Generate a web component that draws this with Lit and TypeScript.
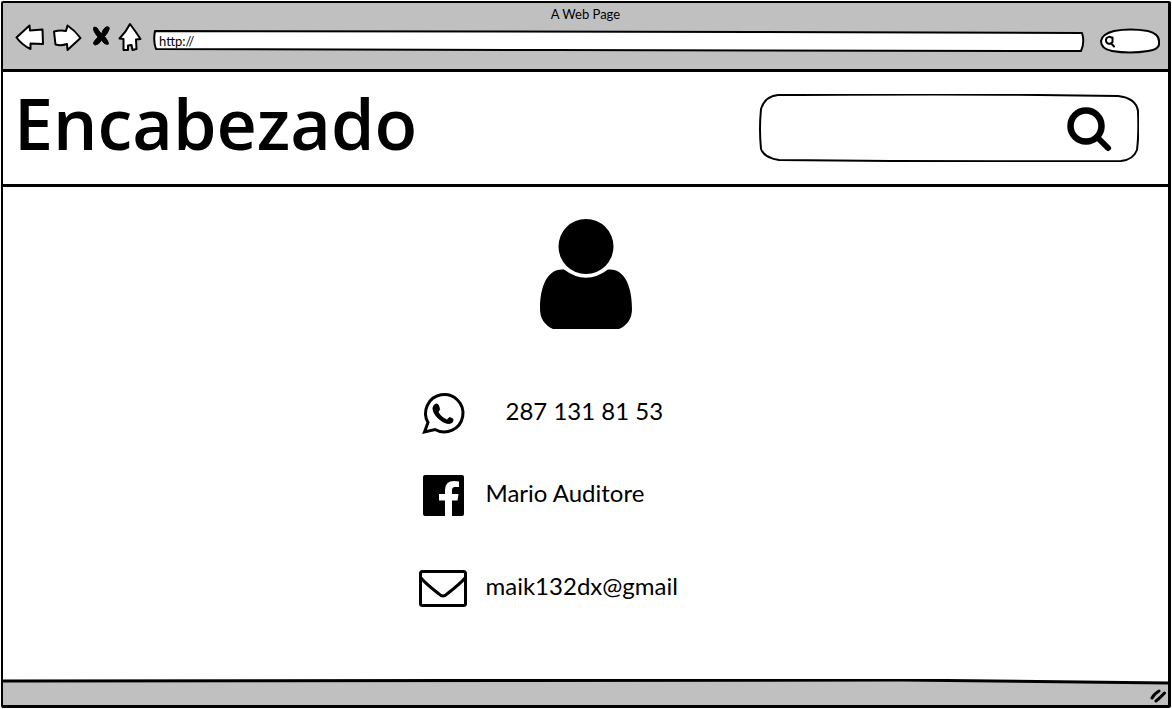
import { LitElement, html, svg, css } from "lit";
import { customElement } from "lit/decorators.js";

const outline = (d: string, w: number, h: number, fill = "#fff") => html`
  <svg class="outline" viewBox="0 0 ${w} ${h}" preserveAspectRatio="none" aria-hidden="true">
    ${svg`<path d=${d} fill=${fill} stroke="#000" stroke-width="2" vector-effect="non-scaling-stroke" stroke-linejoin="round"/>`}
  </svg>`;

@customElement("browser-toolbar")
export class BrowserToolbar extends LitElement {
  static styles = css`
    :host {
      display: block;
      background: #c0c0c0;
      border-bottom: 3px solid #000;
      font-family: Lato, "Open Sans", sans-serif;
      color: #000;
    }
    .title {
      padding-top: 3px;
      font-size: 13px;
      line-height: 16px;
      text-align: center;
    }
    .row {
      display: flex;
      align-items: center;
      gap: 15px;
      padding: 2px 8px 15px 9px;
    }
    .nav {
      display: flex;
      gap: 8px;
      flex: none;
      margin-top: -4px;
    }
    button {
      border: 0;
      padding: 0;
      background: none;
      display: flex;
    }
    svg {
      display: block;
    }
    .nav path {
      fill: #fff;
      stroke: #000;
      stroke-width: 2;
      stroke-linejoin: round;
    }
    .nav .cross {
      fill: #000;
      stroke-width: 1;
    }
    .field {
      position: relative;
      display: flex;
      align-items: center;
      margin-top: 4px;
    }
    .address {
      flex: 1;
      height: 22px;
      margin-left: -4px;
    }
    .quick {
      width: 60px;
      height: 26px;
    }
    .outline {
      position: absolute;
      inset: 0;
      width: 100%;
      height: 100%;
    }
    input {
      position: relative;
      flex: 1;
      min-width: 0;
      border: 0;
      padding: 0 6px;
      background: none;
      font: inherit;
      font-size: 13px;
      line-height: 16px;
      color: #000;
      outline: none;
    }
    .lens {
      position: relative;
      flex: none;
      margin-left: 4px;
    }
  `;

  render() {
    return html`
      <div class="title">A Web Page</div>
      <div class="row">
        <div class="nav">
          <button aria-label="Back">
            <svg width="32" height="30" viewBox="0 0 32 30"><path d="M4.500 15.500 17.500 3.500 18 8.500 30.500 7.500 31 22 18.500 21.500V27Q10 23 4.500 15.500Z" /></svg>
          </button>
          <button aria-label="Forward">
            <svg width="30" height="30" viewBox="0 0 30 30"><path d="M2 9.500Q8 8 14 9L15.500 3.500Q23 8.500 28.500 16L15.500 28 15 22Q9 24 3.500 22.500Z" /></svg>
          </button>
          <button aria-label="Stop">
            <svg width="20" height="30" viewBox="-2 0 20 30"><path class="cross" d="M2 5Q5 4.500 7 9L9.500 12Q11 6.500 14 5Q18 4 17 7.500Q15.500 11.500 12.500 14.500Q16.500 19 16.500 22Q13 23.500 9.500 18Q7 22.500 3.500 23Q0 22.500 2.500 19L6 15Q0 8 2 5Z" /></svg>
          </button>
          <button aria-label="Home">
            <svg width="24" height="30" viewBox="0 0 24 30"><path d="M12 2Q8 10 1.500 16.500L5.500 17 5.500 28 10 28 10 23.500 13.500 23 14.500 28 18.500 27 18 17.500 22.500 17Q18 10 12 2Z" /></svg>
          </button>
        </div>
        <label class="field address">
          ${outline("M2 1Q300 2 600 2L929 3Q932 12 928 21Q600 20 400 20L3 19Q0 11 2 1Z", 932, 22)}
          <input type="text" aria-label="Address" value="http://" />
        </label>
        <label class="field quick">
          ${outline("M14 3Q30 0 48 3Q60 6 59 15Q60 21 48 23Q30 26 12 23Q1 21 1 13Q2 6 14 3Z", 60, 26)}
          <svg class="lens" width="12" height="14" viewBox="0 0 12 14" aria-hidden="true"><path d="M7.500 3.500A3.500 3.500 0 1 0 8.500 8V3.500M7 9 10 12.500" fill="none" stroke="#000" stroke-width="2" stroke-linecap="round" /></svg>
          <input type="text" aria-label="Quick search" />
        </label>
      </div>
    `;
  }
}

@customElement("page-header")
export class PageHeader extends LitElement {
  static styles = css`
    :host {
      display: flex;
      align-items: center;
      justify-content: space-between;
      gap: 24px;
      padding: 12px 29px 12px 11px;
      border-bottom: 3px solid #000;
      font-family: "Open Sans", Lato, sans-serif;
    }
    h1 {
      margin: 0;
      padding-bottom: 10px;
      font-size: 70px;
      line-height: 78px;
      font-weight: 600;
    }
    .search {
      position: relative;
      display: flex;
      align-items: center;
      flex: 0 1 380px;
      min-width: 0;
      height: 68px;
    }
    .outline {
      position: absolute;
      inset: 0;
      width: 100%;
      height: 100%;
    }
    input {
      position: relative;
      flex: 1;
      width: 100%;
      min-width: 0;
      height: 48px;
      border: 0;
      padding: 0 0 0 24px;
      background: none;
      outline: none;
      font: inherit;
      font-size: 24px;
    }
    button {
      position: relative;
      border: 0;
      padding: 4px 0 0;
      margin-right: 26px;
      background: none;
    }
    button svg {
      display: block;
    }
  `;

  render() {
    return html`
      <h1>Encabezado</h1>
      <form class="search" role="search" @submit=${(e: Event) => e.preventDefault()}>
        ${outline("M19 1Q200 0 280 1L359 2Q377 4 379 17Q380 40 378 56Q374 66 362 67Q190 68 20 66Q5 64 2 55Q0 35 2 15Q6 2 19 1Z", 380, 68)}
        <input type="text" aria-label="Buscar" />
        <button aria-label="Buscar">
          <svg width="48" height="48" viewBox="0 0 48 48">
            <circle cx="21" cy="20" r="15.500" fill="none" stroke="#000" stroke-width="6.500" />
            <path d="M32 31 43 42" stroke="#000" stroke-width="6" stroke-linecap="round" />
          </svg>
        </button>
      </form>
    `;
  }
}

@customElement("contact-card")
export class ContactCard extends LitElement {
  static styles = css`
    :host {
      display: flex;
      flex-direction: column;
      align-items: center;
      flex: 1;
      padding: 32px 16px;
      font-family: Lato, "Open Sans", sans-serif;
    }
    svg {
      display: block;
      flex: none;
    }
    ul {
      list-style: none;
      margin: 60px 0 0;
      padding: 0;
      width: 100%;
      max-width: 334px;
    }
    li {
      display: flex;
      align-items: center;
      gap: 19px;
      margin-bottom: 34px;
      font-size: 24px;
      line-height: 32px;
    }
    .phone {
      padding-left: 20px;
    }
    .mail {
      margin-top: 45px;
      margin-bottom: 0;
    }
    li span {
      padding-bottom: 4px;
    }
  `;

  render() {
    return html`
      <svg width="92" height="110" viewBox="0 0 92 110" role="img" aria-label="Usuario">
        <circle cx="46" cy="27.500" r="27.500" />
        <path d="M24 50.500Q46 67 68 50.500C85 49 92 68 92 90Q92 104 79 110H13Q0 104 0 90C0 68 7 49 24 50.500Z" />
      </svg>
      <ul>
        <li>
          <svg width="48" height="48" viewBox="0 0 48 48" role="img" aria-label="WhatsApp">
            <path d="M5.500 43 9 33.500A18.700 18.700 0 1 1 16 40.500Z" fill="none" stroke="#000" stroke-width="3" />
            <path d="M16 15Q19 13 20.500 18L21 20Q21 21 19.500 23Q22 28 28 30.500L30.500 28Q35 29.500 34.500 31Q34 35 29 35C22 34 13 25 13.500 19Q14 16 16 15Z" />
          </svg>
          <span class="phone">287 131 81 53</span>
        </li>
        <li>
          <svg width="48" height="48" viewBox="0 0 48 48" role="img" aria-label="Facebook">
            <path d="M6 4H43Q45 4 45 6V43Q45 45 43 45H33V29.500H38.500L39.500 23H33V19Q33 16 36 16H40V10.500Q26 8 26 19V23H20V29.500H26V45H6Q4 45 4 43V6Q4 4 6 4Z" />
          </svg>
          <span>Mario Auditore</span>
        </li>
        <li class="mail">
          <svg width="48" height="48" viewBox="0 0 48 48" role="img" aria-label="Correo">
            <rect x="1.500" y="7.500" width="45" height="34" rx="2" fill="none" stroke="#000" stroke-width="3" />
            <path d="M2 14Q6 19 20 30Q24 34 28 30Q42 19 46 14" fill="none" stroke="#000" stroke-width="3" />
          </svg>
          <span>maik132dx@gmail</span>
        </li>
      </ul>
    `;
  }
}

@customElement("app-root")
export class AppRoot extends LitElement {
  static styles = css`
    :host {
      display: flex;
      flex-direction: column;
      box-sizing: border-box;
      min-height: 100vh;
      padding: 1px;
      background: #fff;
      color: #000;
    }
    .window {
      flex: 1;
      display: flex;
      flex-direction: column;
      border: solid #000;
      border-width: 2px 3px 3px 2px;
      border-radius: 2px;
    }
    footer {
      position: relative;
      display: flex;
      justify-content: flex-end;
      align-items: flex-end;
      box-sizing: border-box;
      height: 26px;
      padding: 0 1px 2px 0;
    }
    .bar {
      position: absolute;
      inset: 0;
      width: 100%;
      height: 100%;
    }
    .grip {
      position: relative;
    }
  `;

  render() {
    return html`
      <div class="window">
        <browser-toolbar></browser-toolbar>
        <page-header></page-header>
        <contact-card></contact-card>
        <footer>
          <svg class="bar" viewBox="0 0 1166 26" preserveAspectRatio="none" aria-hidden="true">
            <path d="M0 2Q600 0 900 1L1166 4V26H0Z" fill="#c0c0c0" />
            <path d="M0 2Q600 0 900 1L1166 4" fill="none" stroke="#000" stroke-width="3" vector-effect="non-scaling-stroke" />
          </svg>
          <svg class="grip" width="18" height="16" viewBox="0 0 18 16" aria-hidden="true">
            <path d="M3 11Q5 7 10 4M7 14Q11 11 15.500 6" fill="none" stroke="#000" stroke-width="3" stroke-linecap="round" />
          </svg>
        </footer>
      </div>
    `;
  }
}
